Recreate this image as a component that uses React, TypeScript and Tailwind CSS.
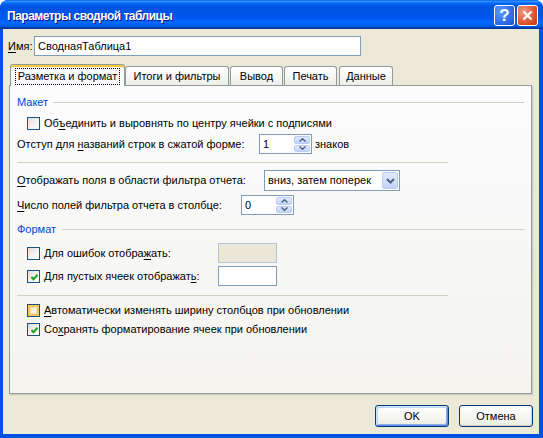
import React from "react";

function U({ children }: { children: React.ReactNode }) {
  return <span className="underline underline-offset-[2px]">{children}</span>;
}

function Checkbox({ checked = false, hot = false }: { checked?: boolean; hot?: boolean }) {
  return (
    <span className="relative w-[13px] h-[13px] shrink-0 border border-[#1C5180] bg-[linear-gradient(135deg,#DCDCD7_0%,#F5F5F3_60%,#FFFFFF_100%)]">
      {hot && (
        <span className="absolute inset-0 border-2 border-[#F9C460] shadow-[inset_0_0_0_1px_#FEDFA0]" />
      )}
      {checked && (
        <svg className="absolute left-[1px] top-[1px]" width="11" height="11" viewBox="0 0 11 11">
          <path d="M2.5 5 L4.5 7.2 L8.6 2.8" fill="none" stroke="#21A121" strokeWidth="2" />
        </svg>
      )}
    </span>
  );
}

function SpinBox({ value }: { value: string }) {
  return (
    <div className="flex h-[20px] w-[53px] border border-[#7F9DB9] bg-white">
      <span className="flex-1 pl-[3px] leading-[18px]">{value}</span>
      <div className="m-[1px] flex w-[16px] flex-col gap-px">
        {[0, 1].map((i) => (
          <div
            key={i}
            className="flex flex-1 items-center justify-center rounded-[2px] border border-[#B9CCF5] bg-[linear-gradient(to_bottom,#E3EBFD,#C2D4FA)]"
          >
            <svg width="7" height="4" viewBox="0 0 7 4">
              <path
                d={i === 0 ? "M0.5 3.5 L3.5 0.7 L6.5 3.5" : "M0.5 0.5 L3.5 3.3 L6.5 0.5"}
                fill="none"
                stroke="#4D6185"
                strokeWidth="1.4"
              />
            </svg>
          </div>
        ))}
      </div>
    </div>
  );
}

function Section({ title, lineStart }: { title: string; lineStart: string }) {
  return (
    <div className="flex h-[16px] items-center pl-[7px] pr-[7px]">
      <span className={`text-[#0046D5] shrink-0 ${lineStart}`}>{title}</span>
      <div className="h-px flex-1 bg-[#D0D0BF]" />
    </div>
  );
}

const tabs = [
  { label: "Итоги и фильтры", cls: "w-[104px]" },
  { label: "Вывод", cls: "w-[53px] ml-[1px]" },
  { label: "Печать", cls: "w-[53px] ml-[1px]" },
  { label: "Данные", cls: "w-[54px] ml-[2px]" },
];

export default function App() {
  return (
    <div className="flex h-[438px] w-[543px] flex-col overflow-hidden rounded-t-[8px] bg-[#0053E2] font-['Liberation_Sans',Arial,sans-serif] text-[11px] text-black">
      {/* Title bar */}
      <div className="flex h-[29px] shrink-0 items-center bg-[linear-gradient(to_bottom,#0058ee_0%,#3593ff_4%,#288eff_6%,#127dff_8%,#036ffc_10%,#0262ee_14%,#0057e5_20%,#0054e3_24%,#0055eb_56%,#005bf5_66%,#026afe_76%,#0062ef_86%,#0052d6_92%,#0040ab_96%,#003092_100%)] pl-[7px] pr-[5px] pt-[2px]">
        <span className="flex-1 text-[12px] font-bold tracking-[-0.5px] text-white [text-shadow:1px_1px_#0F1089]">
          Параметры сводной таблицы
        </span>
        <div className="flex h-[21px] w-[21px] items-center justify-center rounded-[3px] border border-white bg-[radial-gradient(circle_at_30%_30%,#5C9CFF,#2A66E6_70%,#1D51C8)] text-[17px] font-bold leading-none text-white">
          ?
        </div>
        <div className="ml-[2px] flex h-[21px] w-[21px] items-center justify-center rounded-[3px] border border-white bg-[radial-gradient(circle_at_30%_30%,#F29D84,#DD5430_60%,#C23A17)]">
          <svg width="11" height="11" viewBox="0 0 11 11">
            <path d="M1.5 1.5 L9.5 9.5 M9.5 1.5 L1.5 9.5" stroke="white" strokeWidth="2.2" />
          </svg>
        </div>
      </div>

      {/* Body */}
      <div className="mb-[4px] ml-[3px] mr-[4px] flex flex-1 flex-col bg-[#ECE9D8]">
        {/* Name */}
        <div className="flex items-center pl-[5px] pt-[7px]">
          <span className="w-[26px]">
            <U>И</U>мя:
          </span>
          <div className="h-[20px] w-[327px] border border-[#7F9DB9] bg-white pl-[3px] leading-[18px]">
            СводнаяТаблица1
          </div>
        </div>

        {/* Tabs */}
        <div className="relative z-10 mt-[8px] -mb-px flex h-[22px] items-end pl-[7px]">
          <div className="flex h-[22px] w-[115px] items-start justify-center rounded-t-[3px] border-x border-t border-[#919B9C] bg-[#FCFCFE] pt-[2px] shadow-[inset_0_2px_0_#FFC73C]">
            <span className="mt-[1px] border border-dotted border-black px-[2px] leading-[15px]">
              Разметка и формат
            </span>
          </div>
          {tabs.map((t) => (
            <div
              key={t.label}
              className={`mb-px flex h-[19px] items-center justify-center rounded-t-[3px] border-x border-t border-[#919B9C] bg-[linear-gradient(to_bottom,#FFFFFF_0%,#FAFAF9_26%,#F0F0EA_95%,#ECEBE5_100%)] ${t.cls}`}
            >
              {t.label}
            </div>
          ))}
        </div>

        {/* Panel */}
        <div className="ml-[6px] flex h-[309px] w-[523px] flex-col border border-[#919B9C] bg-[linear-gradient(to_bottom,#FCFCFE,#F4F3EE)] pt-[8px] shadow-[1px_1px_0_#D0CEBF,2px_2px_0_#E2DFD2]">
          <Section title="Макет" lineStart="mr-[5px]" />

          <div className="mt-[2px] flex h-[22px] items-center pl-[17px]">
            <Checkbox />
            <span className="ml-[4px]">
              Об<U>ъ</U>единить и выровнять по центру ячейки с подписями
            </span>
          </div>

          <div className="flex h-[20px] items-center pl-[7px]">
            <span className="w-[242px]">
              Отступ для <U>н</U>азваний строк в сжатой форме:
            </span>
            <SpinBox value="1" />
            <span className="ml-[3px]">знаков</span>
          </div>

          <div className="ml-[7px] mt-[8px] h-px w-[431px] bg-[#D0D0BF]" />

          <div className="mt-[7px] flex h-[21px] items-center pl-[7px]">
            <span className="w-[247px]">
              <U>О</U>тображать поля в области фильтра отчета:
            </span>
            <div className="flex h-[21px] w-[136px] items-center border border-[#7F9DB9] bg-white">
              <span className="flex-1 pl-[3px]">вниз, затем поперек</span>
              <div className="mr-[1px] flex h-[17px] w-[16px] items-center justify-center rounded-[2px] border border-[#B9CCF5] bg-[linear-gradient(to_bottom,#E3EBFD,#C2D4FA)]">
                <svg width="9" height="6" viewBox="0 0 9 6">
                  <path d="M1 1 L4.5 4.5 L8 1" fill="none" stroke="#4D6185" strokeWidth="2" />
                </svg>
              </div>
            </div>
          </div>

          <div className="mt-[4px] flex h-[20px] items-center pl-[7px]">
            <span className="w-[224px]">
              <U>Ч</U>исло полей фильтра отчета в столбце:
            </span>
            <SpinBox value="0" />
          </div>

          <div className="mt-[6px]">
            <Section title="Формат" lineStart="mr-[6px]" />
          </div>

          <div className="mt-[6px] flex h-[20px] items-center pl-[17px]">
            <Checkbox />
            <span className="ml-[4px] w-[174px]">
              Для ошибок отобра<U>ж</U>ать:
            </span>
            <div className="h-[20px] w-[59px] border border-[#B5C3D3] bg-[#EBE8D8]" />
          </div>

          <div className="mt-[3px] flex h-[20px] items-center pl-[17px]">
            <Checkbox checked />
            <span className="ml-[4px] w-[174px]">
              Для пустых ячеек отображат<U>ь</U>:
            </span>
            <div className="h-[20px] w-[59px] border border-[#7F9DB9] bg-white" />
          </div>

          <div className="ml-[7px] mt-[9px] h-px w-[431px] bg-[#D0D0BF]" />

          <div className="mt-[4px] flex h-[20px] items-center pl-[17px]">
            <Checkbox hot />
            <span className="ml-[4px]">
              <U>А</U>втоматически изменять ширину столбцов при обновлении
            </span>
          </div>

          <div className="flex h-[18px] items-center pl-[17px]">
            <Checkbox checked />
            <span className="ml-[4px]">
              Со<U>х</U>ранять форматирование ячеек при обновлении
            </span>
          </div>
        </div>

        {/* Footer buttons */}
        <div className="mr-[6px] mt-[11px] flex justify-end gap-[10px]">
          <button className="h-[22px] w-[74px] rounded-[3px] border border-[#003C74] bg-[linear-gradient(to_bottom,#FFFFFF,#F0F0EA_85%,#E3E2DA)] shadow-[inset_1px_1px_0_#CEE7FF,inset_-1px_-1px_0_#6982EE,inset_2px_2px_0_#BCD4F6,inset_-2px_-2px_0_#89ADE4]">
            OK
          </button>
          <button className="h-[22px] w-[74px] rounded-[3px] border border-[#003C74] bg-[linear-gradient(to_bottom,#FFFFFF,#F0F0EA_85%,#E3E2DA)] shadow-[inset_-1px_-1px_0_#D6D0C5]">
            Отмена
          </button>
        </div>
      </div>
    </div>
  );
}
